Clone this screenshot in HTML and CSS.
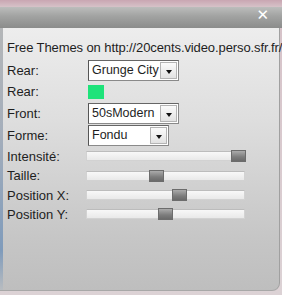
FILE: index.html
```html
<!DOCTYPE html>
<html lang="fr">
<head>
  <meta charset="UTF-8" />
  <title>Themes</title>
  <link rel="stylesheet" href="styles.css">
</head>
<body>
  <div class="window">
    <!-- Barre de titre -->
    <div class="titlebar">
      <span class="close">&#x2715;</span>
    </div>

    <!-- Contenu -->
    <div class="panel">
      <div class="credit">Free Themes on http://20cents.video.perso.sfr.fr/</div>

      <div class="row row-rear">
        <span class="label">Rear:</span>
        <div class="select sel-wide"><span class="val">Grunge City</span><span class="arrow"></span></div>
      </div>
      <div class="row row-color">
        <span class="label">Rear:</span>
        <span class="swatch"></span>
      </div>
      <div class="row row-front">
        <span class="label">Front:</span>
        <div class="select sel-wide"><span class="val">50sModern</span><span class="arrow"></span></div>
      </div>
      <div class="row row-forme">
        <span class="label">Forme:</span>
        <div class="select sel-forme"><span class="val">Fondu</span><span class="arrow"></span></div>
      </div>

      <div class="row slide s1">
        <span class="label">Intensité:</span>
        <div class="track"><span class="thumb" style="left: 144px"></span></div>
      </div>
      <div class="row slide s2">
        <span class="label">Taille:</span>
        <div class="track"><span class="thumb" style="left: 62px"></span></div>
      </div>
      <div class="row slide s3">
        <span class="label">Position X:</span>
        <div class="track"><span class="thumb" style="left: 85px"></span></div>
      </div>
      <div class="row slide s4">
        <span class="label">Position Y:</span>
        <div class="track"><span class="thumb" style="left: 71px"></span></div>
      </div>
    </div>
  </div>
</body>
</html>
```

FILE: styles.css
```css
body {
  margin: 0;
  padding: 0;
  font-family: 'Liberation Sans', Arial, sans-serif;
  font-size: 13px;
  color: #1e1e1e;
  background: #d9ccd0;
}

.window {
  width: 282px;
  height: 295px;
  background: linear-gradient(#c9a6b2, #d6c2c8 7px, #dcd2d5);
  padding-top: 7px;
  box-sizing: border-box;
  overflow: hidden;
}

/* Barre de titre */
.titlebar {
  height: 21px;
  background: linear-gradient(#bcbdbc, #a2a3a2 9px, #8b8c8b);
  display: flex;
  justify-content: flex-end;
  align-items: center;
  padding-right: 13px;
}

.close {
  color: #fff;
  font-family: 'DejaVu Sans', sans-serif;
  font-size: 15px;
  font-weight: bold;
  line-height: 1;
  margin-top: -5px;
}

/* Contenu */
.panel {
  height: 263px;
  margin-right: 2px;
  padding: 12px 0 0 7px;
  box-sizing: border-box;
  border-right: 1px solid #a0a0a0;
  border-bottom: 1px solid #a8a8a8;
  border-bottom-right-radius: 8px;
  background:
    linear-gradient(#b4b6b8, #a4aebb 40%, #7f9bbb 85%, #b8bcc0) left / 3px 100% no-repeat,
    linear-gradient(#ededed, #dedede 35%, #c6c6c6 80%, #bebebe);
}

.credit {
  white-space: nowrap;
  line-height: 15px;
  letter-spacing: -0.1px;
  margin-bottom: 4px;
}

.row {
  display: flex;
  align-items: center;
}

.label {
  width: 81px;
  flex: none;
}

.row-rear { height: 22px; }
.row-color { height: 21px; }
.row-front { height: 23px; }
.row-forme { height: 21px; }

.select {
  display: flex;
  align-items: stretch;
  height: 21px;
  box-sizing: border-box;
  background: #fff;
  border: 1px solid #8a8a8a;
  border-left-color: #555;
  border-top-color: #666;
  padding: 1px;
}

.sel-wide { width: 91px; }
.sel-forme { width: 81px; }

.val {
  flex: 1;
  padding-left: 2px;
  line-height: 17px;
  font-size: 12.5px;
  white-space: nowrap;
  overflow: hidden;
}

.arrow {
  width: 17px;
  flex: none;
  box-sizing: border-box;
  border: 1px solid #b4b4b4;
  background: linear-gradient(#fbfbfb, #e2e2e2);
  position: relative;
}

.arrow::after {
  content: "";
  position: absolute;
  left: 5px;
  top: 7px;
  border-left: 3px solid transparent;
  border-right: 3px solid transparent;
  border-top: 4px solid #111;
}

.swatch {
  width: 16px;
  height: 14px;
  background: #1ee37a;
}

/* Curseurs */
.slide .label {
  width: 79px;
}

.s1 { height: 20px; }
.s2 { height: 19px; }
.s3 { height: 20px; }
.s4 { height: 18px; }

.track {
  position: relative;
  width: 157px;
  height: 8px;
  background: linear-gradient(#f8f8f8, #e9e9e9);
  border: 1px solid #d2d2d2;
  border-top-color: #bcbcbc;
}

.thumb {
  position: absolute;
  top: -2px;
  width: 15px;
  height: 12px;
  border: 1px solid #6c6c6c;
  box-sizing: border-box;
  background: linear-gradient(#ababab, #7c7c7c 60%, #6a6a6a);
}
```
